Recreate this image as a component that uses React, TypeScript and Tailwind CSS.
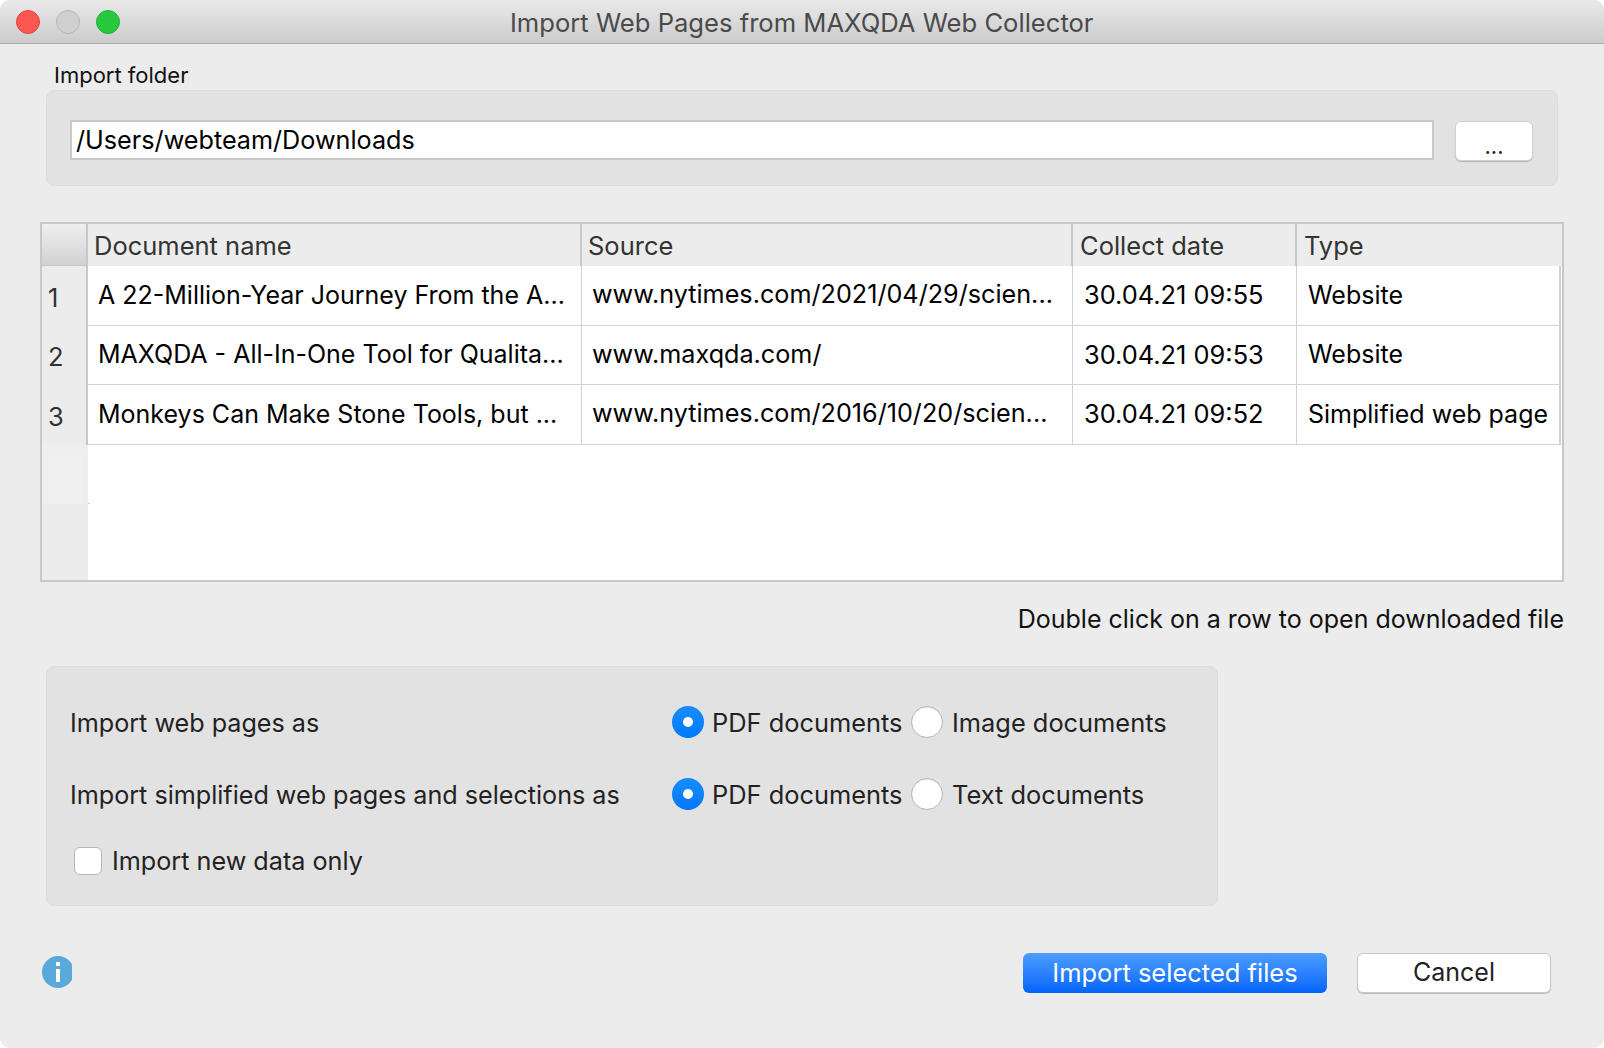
const rows = [
  ['1', 'A 22-Million-Year Journey From the A...', 'www.nytimes.com/2021/04/29/scien...', '30.04.21 09:55', 'Website'],
  ['2', 'MAXQDA - All-In-One Tool for Qualita...', 'www.maxqda.com/', '30.04.21 09:53', 'Website'],
  ['3', 'Monkeys Can Make Stone Tools, but ...', 'www.nytimes.com/2016/10/20/scien...', '30.04.21 09:52', 'Simplified web page'],
];

const headers = ['Document name', 'Source', 'Collect date', 'Type'];

// per-column text size in the body rows
const cellSize = ['text-[25px]', 'text-[25.2px]', 'text-[25.4px]', 'text-[25px]'];

function Radio({ checked }: { checked?: boolean }) {
  if (checked) {
    return (
      <span className="flex h-[32px] w-[32px] shrink-0 items-center justify-center rounded-full bg-gradient-to-b from-[#1a8cff] to-[#0078fa]">
        <span className="h-[10px] w-[10px] rounded-full bg-white" />
      </span>
    );
  }
  return <span className="block h-[32px] w-[32px] shrink-0 rounded-full border border-[#b5b5b5] bg-white shadow-[inset_0_1px_1px_rgba(0,0,0,0.08)]" />;
}

function OptionRow({ label, second, className }: { label: string; second: string; className?: string }) {
  return (
    <div className={'flex h-[32px] items-center whitespace-nowrap text-[25.4px] text-[#222] ' + (className ?? '')}>
      <span className="w-[602px] pt-[3px] text-[25.15px]">{label}</span>
      <Radio checked />
      <span className="ml-[8px] w-[199px] pt-[3px]">PDF documents</span>
      <Radio />
      <span className="ml-[9px] pt-[3px]">{second}</span>
    </div>
  );
}

export default function App() {
  return (
    <div className="h-[1048px] w-[1604px] overflow-hidden bg-white font-['Inter',sans-serif]">
      <div className="flex h-full flex-col overflow-hidden rounded-[10px] bg-[#ececec]">
        {/* title bar */}
        <div className="flex h-[44px] shrink-0 items-center border-b border-[#a8a8a8] bg-gradient-to-b from-[#e9e9e9] to-[#cccccc] pl-[16px]">
          <div className="flex gap-[16px]">
            <span className="h-[24px] w-[24px] rounded-full border border-[#e2463f] bg-[#fc5753]" />
            <span className="h-[24px] w-[24px] rounded-full border border-[#b5b5b5] bg-[#d0d0d0]" />
            <span className="h-[24px] w-[24px] rounded-full border border-[#1eb137] bg-[#28c83e]" />
          </div>
          <div className="ml-[390px] pt-[3px] text-[25.6px] text-[#4a4a4a]">Import Web Pages from MAXQDA Web Collector</div>
        </div>

        <div className="ml-[54px] mt-[17px] h-[29px] text-[22px] leading-[28px] text-[#111]">Import folder</div>

        {/* folder box */}
        <div className="ml-[46px] flex h-[96px] w-[1512px] items-start rounded-[8px] border border-[#dcdcdc] bg-[#e2e2e2] pl-[23px] pt-[29px]">
          <div className="flex h-[40px] w-[1364px] items-center border-2 border-[#c8c8c8] bg-white pl-[4px] pt-[2px] text-[25.2px] text-black">
            /Users/webteam/Downloads
          </div>
          <button className="ml-[21px] mt-[1px] h-[40px] w-[78px] rounded-[6px] border border-[#d0d0d0] bg-white pt-[8px] text-[22px] text-[#222] shadow-[0_1px_1px_rgba(0,0,0,0.2)]">
            ...
          </button>
        </div>

        {/* table */}
        <div className="ml-[40px] mt-[36px] flex h-[360px] w-[1524px] flex-col border-2 border-[#c8c8c8] bg-white">
          <div className="grid h-[42px] shrink-0 grid-cols-[46px_494px_491px_224px_265px] bg-[#ececec]">
            <div className="border-b border-r-2 border-[#c8c8c8] bg-gradient-to-b from-[#efefef] to-[#d2d2d2]" />
            {headers.map((h, i) => (
              <div
                key={h}
                className={
                  'flex items-center pt-[2px] text-[25.5px] text-[#333] ' +
                  (i < 2 ? 'pl-[6px] ' : 'pl-[7px] ') +
                  (i < 3 ? 'border-r-2 border-[#c8c8c8]' : '')
                }
              >
                {h}
              </div>
            ))}
          </div>
          {rows.map(r => (
            <div key={r[0]} className="grid h-[59.5px] shrink-0 grid-cols-[46px_494px_491px_224px_265px]">
              <div className="flex items-center border-r-2 border-[#c8c8c8] bg-[#ececec] pl-[6px] pt-[4px] text-[25.5px] text-[#333]">
                {r[0]}
              </div>
              {r.slice(1).map((c, i) => (
                <div
                  key={i}
                  className={
                    'flex items-center whitespace-nowrap border-b-[1.5px] border-r border-[#d2d2d2] text-black ' +
                    cellSize[i] + ' ' +
                    (i < 2 ? 'pl-[10px] ' : 'pl-[11px] ') +
                    (i === 3 ? 'mr-[1px] border-r-2' : '')
                  }
                >
                  {c}
                </div>
              ))}
            </div>
          ))}
          <div className="flex min-h-0 flex-1">
            <div className="w-[46px] bg-[#ececec]">
              <div className="h-[59px] bg-[#eeeeee] pl-[6px] pt-[11px]">
                <div className="h-[48px] w-[35px] bg-[#f0f0f0]" />
              </div>
            </div>
            <div className="flex-1 bg-white">
              <div className="mt-[58px] h-px w-[2px] bg-[#cccccc]" />
            </div>
          </div>
        </div>

        <div className="mr-[40px] mt-[21px] h-[32px] text-right text-[25px] leading-[32px] text-[#111]">
          Double click on a row to open downloaded file
        </div>

        {/* import options */}
        <div className="ml-[46px] mt-[31px] flex h-[240px] w-[1172px] flex-col rounded-[8px] border border-[#dcdcdc] bg-[#e2e2e2] pl-[23px] pt-[39px]">
          <OptionRow label="Import web pages as" second="Image documents" />
          <OptionRow label="Import simplified web pages and selections as" second="Text documents" className="mt-[40px]" />
          <div className="ml-[4px] mt-[31px] flex items-center">
            <span className="block h-[28px] w-[28px] rounded-[6px] border border-[#b5b5b5] bg-white" />
            <span className="ml-[10px] pt-[2px] text-[25.2px] text-[#222]">Import new data only</span>
          </div>
        </div>

        {/* footer */}
        <div className="ml-[42px] mt-[47px] flex items-start">
          <div className="mt-[3px] h-[32px] w-[30px] overflow-hidden">
            <svg width="32" height="32" viewBox="0 0 32 32">
              <circle cx="16" cy="16" r="16" fill="#5aa9db" />
              <rect x="14" y="6" width="4" height="4" fill="#fff" />
              <rect x="14" y="13" width="4" height="13" fill="#fff" />
            </svg>
          </div>
          <button className="ml-[951px] h-[40px] w-[304px] rounded-[6px] bg-gradient-to-b from-[#4c9dff] to-[#0064fa] text-[25.5px] text-white">
            Import selected files
          </button>
          <button className="ml-[30px] h-[40px] w-[194px] rounded-[6px] border border-[#c8c8c8] bg-white text-[25px] text-[#222] shadow-[0_1px_1px_rgba(0,0,0,0.2)]">
            Cancel
          </button>
        </div>
      </div>
    </div>
  );
}
